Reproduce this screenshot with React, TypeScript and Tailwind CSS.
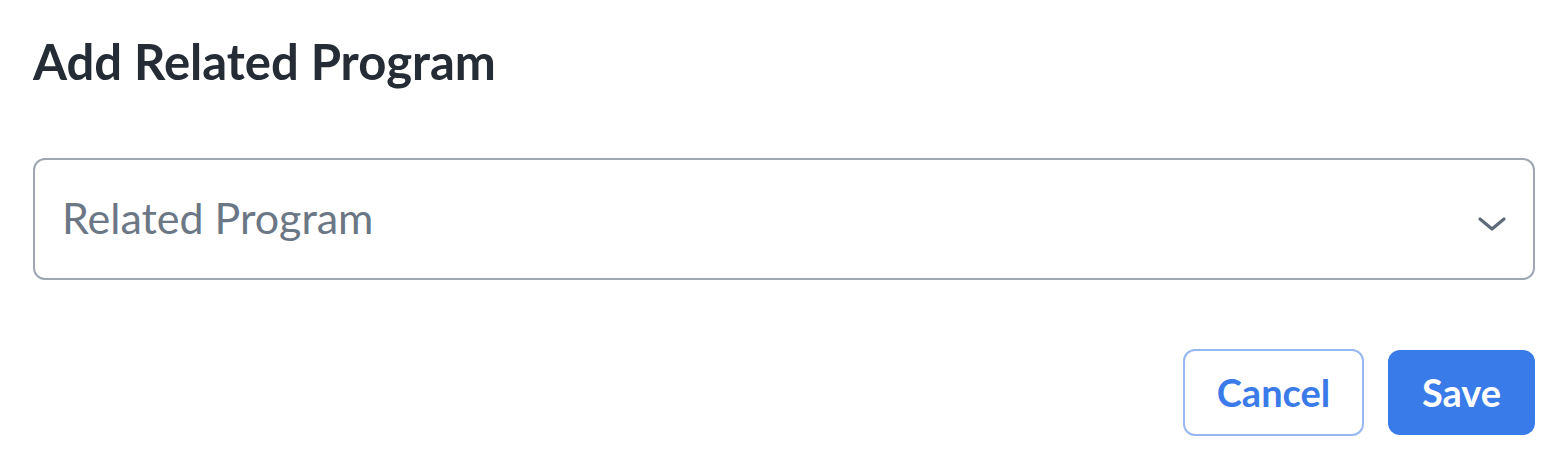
export default function App() {
  return (
    <div className="w-[1562px] h-[462px] bg-white font-['Lato',sans-serif] pl-[33px] pr-[27px] pt-[33px]">
      <h1 className="text-[49px] leading-[56px] font-bold text-[#252c36]">Add Related Program</h1>
      <div className="mt-[69px] h-[122px] w-full rounded-[12px] border-2 border-[#9ea7b2] flex items-center justify-between pl-[27px] pr-[26px]">
        <span className="text-[43px] leading-none text-[#6b7785] -mt-[4px]">Related Program</span>
        <svg width="30" height="18" viewBox="0 0 30 18" className="mt-[10px]" fill="none">
          <path d="M3 4 L15 14 L27 4" stroke="#5f6b7a" strokeWidth="3.2" strokeLinecap="round" strokeLinejoin="round" />
        </svg>
      </div>
      <div className="mt-[69px] flex justify-end gap-[24px]">
        <button className="h-[87px] w-[181px] rounded-[12px] border-2 border-[#98b8f2] bg-white text-[38px] font-bold text-[#3a7be9] flex items-center justify-center">
          Cancel
        </button>
        <button className="h-[85px] w-[147px] mt-[1px] rounded-[12px] bg-[#3a7bea] text-[38px] font-bold text-white flex items-center justify-center">
          Save
        </button>
      </div>
    </div>
  );
}
